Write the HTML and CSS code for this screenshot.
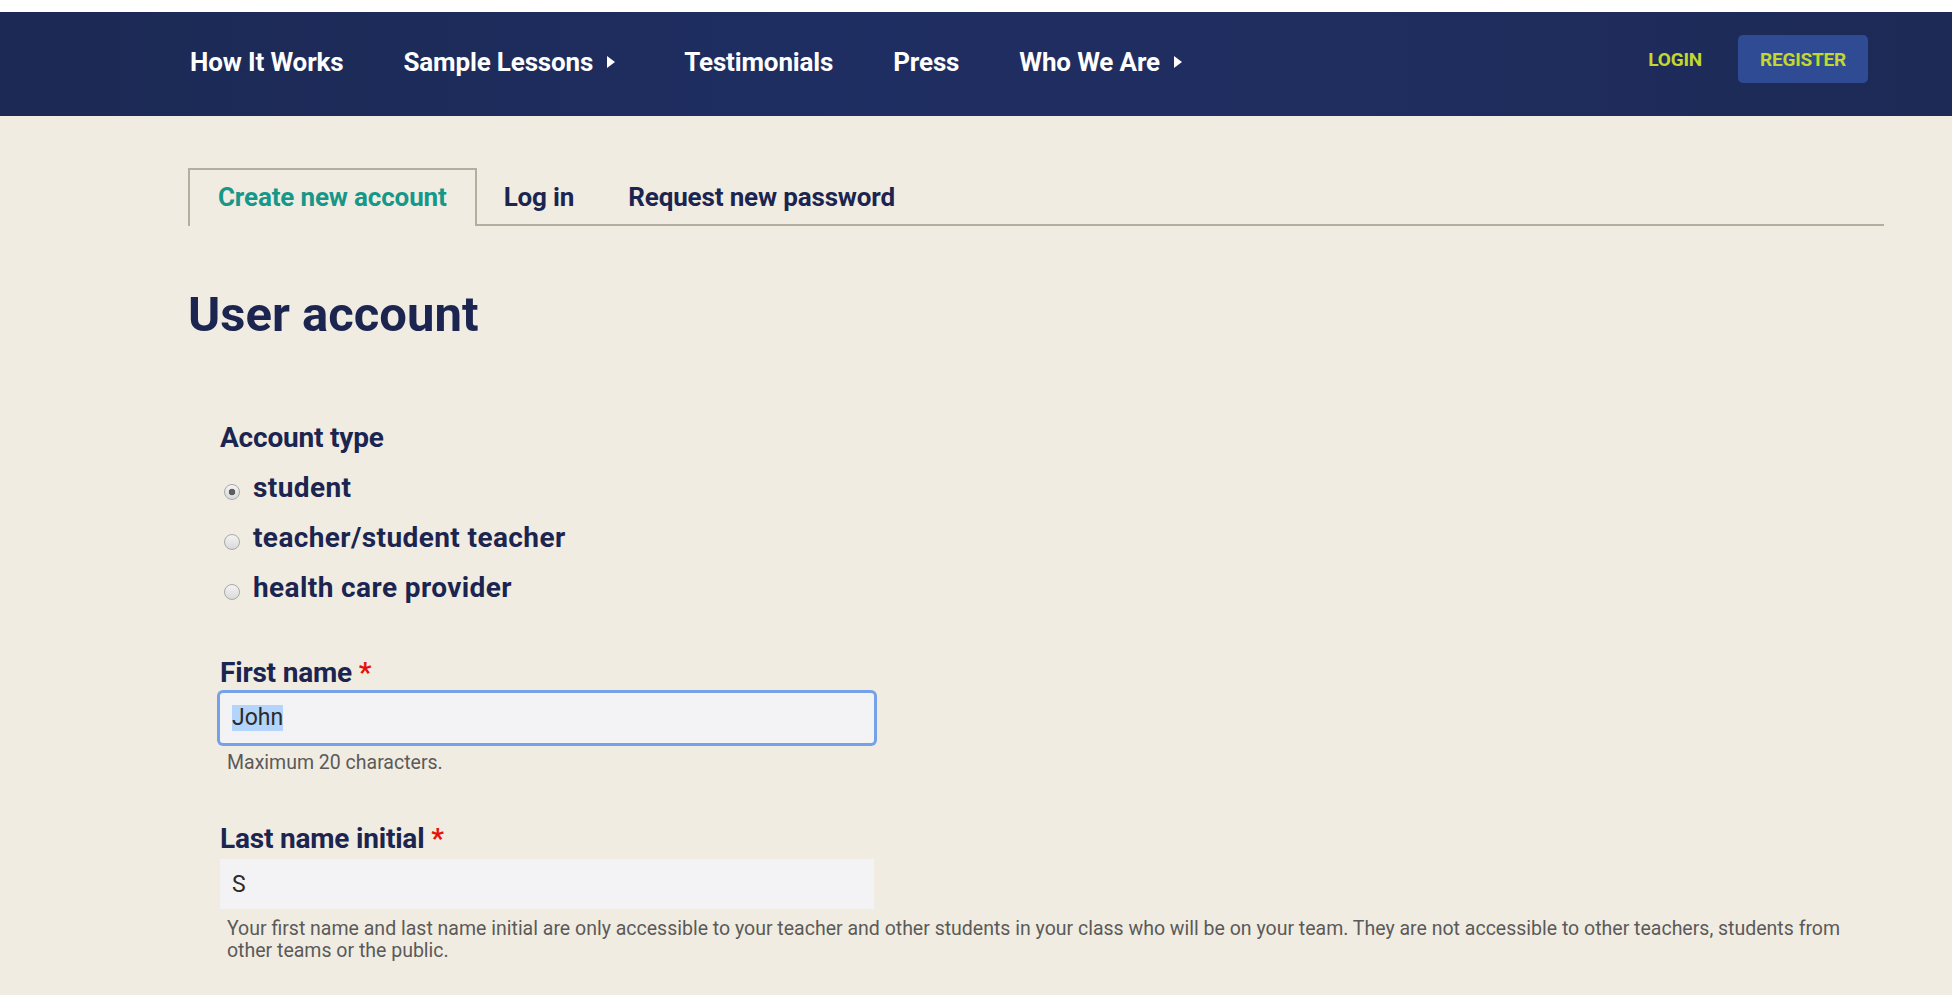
FILE: index.html
```html
<!DOCTYPE html>
<html lang="en">
<head>
<meta charset="utf-8">
<title>User account</title>
<link rel="stylesheet" href="styles.css">
</head>
<body>
<header class="site-header">
  <nav class="navbar">
    <ul class="main-menu">
      <li class="menu-item"><a href="#">How It Works</a></li>
      <li class="menu-item"><a href="#">Sample Lessons</a><svg class="caret" viewBox="0 0 8 12"><polygon points="0,0 8,6 0,12" fill="#fff"/></svg></li>
      <li class="menu-item"><a href="#">Testimonials</a></li>
      <li class="menu-item"><a href="#">Press</a></li>
      <li class="menu-item"><a href="#">Who We Are</a><svg class="caret" viewBox="0 0 8 12"><polygon points="0,0 8,6 0,12" fill="#fff"/></svg></li>
    </ul>
    <div class="user-links">
      <a class="login-link" href="#">LOGIN</a>
      <a class="register-btn" href="#">REGISTER</a>
    </div>
  </nav>
</header>
<main class="page">
  <ul class="tabs">
    <li class="tab is-active"><a href="#">Create new account</a></li>
    <li class="tab"><a href="#">Log in</a></li>
    <li class="tab"><a href="#">Request new password</a></li>
  </ul>
  <h1 class="page-title">User account</h1>
  <form class="account-form">
    <div class="field">
      <div class="field-label">Account type</div>
      <label class="radio-option"><input class="radio" type="radio" name="type" checked>student</label>
      <label class="radio-option"><input class="radio" type="radio" name="type">teacher/student teacher</label>
      <label class="radio-option"><input class="radio" type="radio" name="type">health care provider</label>
    </div>
    <div class="field field-text">
      <div class="field-label">First name <span class="req">*</span></div>
      <div class="text-input is-focused"><span class="selected">John</span></div>
      <div class="help">Maximum 20 characters.</div>
    </div>
    <div class="field field-text">
      <div class="field-label">Last name initial <span class="req">*</span></div>
      <div class="text-input">S</div>
      <div class="help">Your first name and last name initial are only accessible to your teacher and other students in your class who will be on your team. They are not accessible to other teachers, students from other teams or the public.</div>
    </div>
  </form>
</main>
</body>
</html>
```

FILE: styles.css
```css
html, body {
  margin: 0;
  padding: 0;
}

body {
  background: #f1ece1;
  font-family: Roboto, "Liberation Sans", sans-serif;
  color: #1b2550;
  overflow: hidden;
}

a {
  text-decoration: none;
}

/* ---------- header ---------- */
.site-header {
  border-top: 12px solid #ffffff;
}

.navbar {
  box-sizing: border-box;
  height: 104px;
  padding: 0 84px 4px 160px;
  display: flex;
  align-items: center;
  background: linear-gradient(90deg, #1c2954 0%, #1f2e62 45%, #1f2d5f 70%, #1d2a56 100%);
}

.main-menu {
  display: flex;
  align-items: center;
  list-style: none;
  margin: 0;
  padding: 0;
}

.menu-item {
  display: flex;
  align-items: center;
  padding: 0 30px;
}

.menu-item a {
  color: #ffffff;
  font-weight: 700;
  font-size: 26px;
  line-height: 30px;
  letter-spacing: -0.15px;
}

.caret {
  width: 8px;
  height: 12px;
  margin: 0 9px 0 14px;
}

.user-links {
  margin: 0 0 6px auto;
  display: flex;
  align-items: center;
  gap: 36px;
}

.login-link,
.register-btn {
  color: #c2d82e;
  font-weight: 700;
  font-size: 19px;
  letter-spacing: -0.2px;
}

.register-btn {
  width: 130px;
  height: 48px;
  display: flex;
  align-items: center;
  justify-content: center;
  background: #2e4b94;
  border-radius: 5px;
}

/* ---------- page ---------- */
.page {
  padding: 0 68px 0 188px;
}

.tabs {
  display: flex;
  list-style: none;
  margin: 52px 0 0;
  padding: 0;
  border-bottom: 2px solid #b4ae9f;
}

.tab {
  padding: 12px 25px 14px;
  border: 2px solid transparent;
  border-bottom: 0;
  margin-bottom: -2px;
}

.tab a {
  display: block;
  font-size: 26px;
  line-height: 30px;
  font-weight: 700;
  color: #1b2550;
  letter-spacing: -0.15px;
}

.tab.is-active {
  padding: 12px 28px 14px;
  border-color: #b4ae9f;
  background: #f1ece1;
}

.tab.is-active a {
  color: #15978a;
}

.page-title {
  margin: 61px 0 0;
  font-size: 49px;
  line-height: 56px;
  font-weight: 700;
  color: #1b2550;
}

/* ---------- form ---------- */
.account-form {
  margin-top: 78px;
  padding-left: 32px;
}

.field-label {
  font-size: 28px;
  line-height: 34px;
  font-weight: 700;
  color: #1b2550;
  letter-spacing: -0.2px;
}

.req {
  color: #e3120b;
}

.radio-option {
  display: flex;
  align-items: center;
  margin-top: 16px;
  font-size: 28px;
  line-height: 34px;
  font-weight: 700;
  color: #1b2550;
  letter-spacing: 0.4px;
}

.radio {
  appearance: none;
  -webkit-appearance: none;
  box-sizing: border-box;
  width: 16px;
  height: 16px;
  margin: 8px 13px 0 4px;
  border: 1px solid #a9a9a9;
  border-radius: 50%;
  background: linear-gradient(#f4f4f4, #d9d9d9);
}

.radio:checked {
  background: radial-gradient(circle, #5e5e5e 0 3px, transparent 3.6px), linear-gradient(#f4f4f4, #d9d9d9);
}

.field-text {
  margin-top: 51px;
}

.field-text + .field-text {
  margin-top: 48px;
}

.text-input {
  box-sizing: border-box;
  width: 654px;
  height: 50px;
  margin-top: 3px;
  padding: 0 12px;
  display: flex;
  align-items: center;
  background: #f3f3f6;
  font-family: Roboto, "Liberation Sans", sans-serif;
  font-size: 23px;
  color: #2b2b2b;
}

.text-input.is-focused {
  border-radius: 3px;
  box-shadow: 0 0 0 3px #75a1e8;
}

.selected {
  background: #b3d4fc;
  line-height: 26px;
}

.help {
  margin-top: 9px;
  padding-left: 7px;
  font-size: 19.5px;
  line-height: 22px;
  color: #5a5a5a;
}
```
